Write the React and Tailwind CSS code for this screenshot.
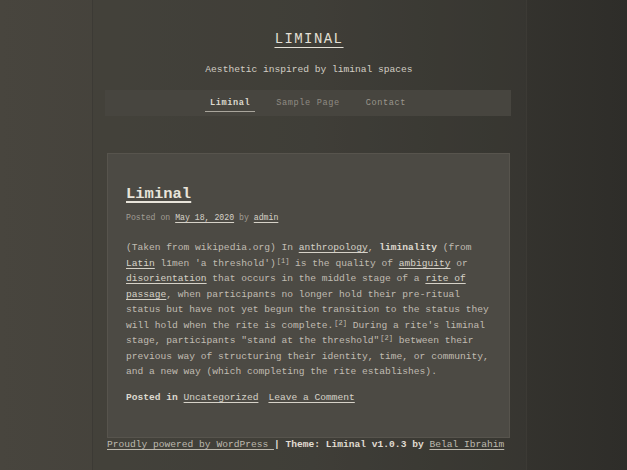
import React from 'react'

const mono = { fontFamily: '"Liberation Mono", "DejaVu Sans Mono", monospace' }

function Sup({ n }) {
  return <span className="text-[7px] leading-none align-[3px] ml-[1px]">[{n}]</span>
}

function A({ children, className = '' }) {
  return <a href="#" className={`underline underline-offset-2 decoration-1 text-[#d6d2c8] ${className}`}>{children}</a>
}

export default function App() {
  return (
    <div
      className="min-h-[470px] w-full bg-gradient-to-r from-[#48453e] via-[#403e38] to-[#2e2d29] text-[#c0bcb2] overflow-hidden"
      style={mono}
    >
      <div className="ml-[92px] w-[435px] min-h-[470px] pl-[14px] bg-[#403e38]/30 border-x border-[#3c3a35]">
        {/* header */}
        <header className="w-[404px] pt-[29px] text-center">
          <h1 className="text-[14px] leading-[20px] tracking-[1.4px] text-[#e4e0d6] underline underline-offset-[4px] decoration-1">
            <a href="#">LIMINAL</a>
          </h1>
          <p className="mt-[14px] text-[9.6px] leading-[14px] text-[#d2cec4]">
            Aesthetic inspired by liminal spaces
          </p>
          <nav className="mt-[13px] -ml-[2px] bg-[#47453f] pt-[7px] pb-[4px] flex justify-center gap-[16px] text-[8.6px] leading-[12px] tracking-[0.6px]">
            <a href="#" className="px-[5px] pb-[2px] border-b border-[#a9a59c] text-[#ddd9cf] font-bold">Liminal</a>
            <a href="#" className="px-[5px] pb-[2px] border-b border-transparent text-[#8f8b83]">Sample Page</a>
            <a href="#" className="px-[5px] pb-[2px] border-b border-transparent text-[#9a968d]">Contact</a>
          </nav>
        </header>

        {/* post card */}
        <article className="mt-[37px] w-[403px] bg-[#4c4a44] border border-[#57544d] pl-[18px] pt-[29px] pb-[32px]">
          <h2 className="text-[15.5px] leading-[22px] font-bold text-[#e8e4da] underline underline-offset-[3px] decoration-2">
            <a href="#">Liminal</a>
          </h2>
          <div className="mt-[7px] text-[8.2px] leading-[12px] text-[#a19d94]">
            Posted on <A>May 18, 2020</A> by <A>admin</A>
          </div>
          <p className="mt-[16px] w-[380px] text-[9.6px] leading-[15.5px] whitespace-nowrap">
            (Taken from wikipedia.org) In <A>anthropology</A>, <b className="text-[#ddd9cf]">liminality</b> (from<br />
            <A>Latin</A> <i className="not-italic">līmen</i> 'a threshold')<Sup n={1} /> is the quality of <A>ambiguity</A> or<br />
            <A>disorientation</A> that occurs in the middle stage of a <A>rite of<br />passage</A>, when participants no longer hold their pre-ritual<br />
            status but have not yet begun the transition to the status they<br />
            will hold when the rite is complete.<Sup n={2} /> During a rite's liminal<br />
            stage, participants "stand at the threshold"<Sup n={2} /> between their<br />
            previous way of structuring their identity, time, or community,<br />
            and a new way (which completing the rite establishes).
          </p>
          <div className="mt-[10px] text-[9.6px] leading-[15.5px]">
            <b className="text-[#ddd9cf]">Posted in</b> <A>Uncategorized</A><A className="ml-[10px]">Leave a Comment</A>
          </div>
        </article>

        {/* footer */}
        <footer className="w-[403px] text-[9.6px] leading-[14px] whitespace-nowrap">
          <a href="#" className="underline underline-offset-2 text-[#bdb9af]">Proudly powered by WordPress </a>
          <span className="font-bold text-[#e0dcd2]">| Theme: Liminal v1.0.3 by </span>
          <a href="#" className="underline underline-offset-2 text-[#bdb9af]">Belal Ibrahim</a>
        </footer>
      </div>
    </div>
  )
}
